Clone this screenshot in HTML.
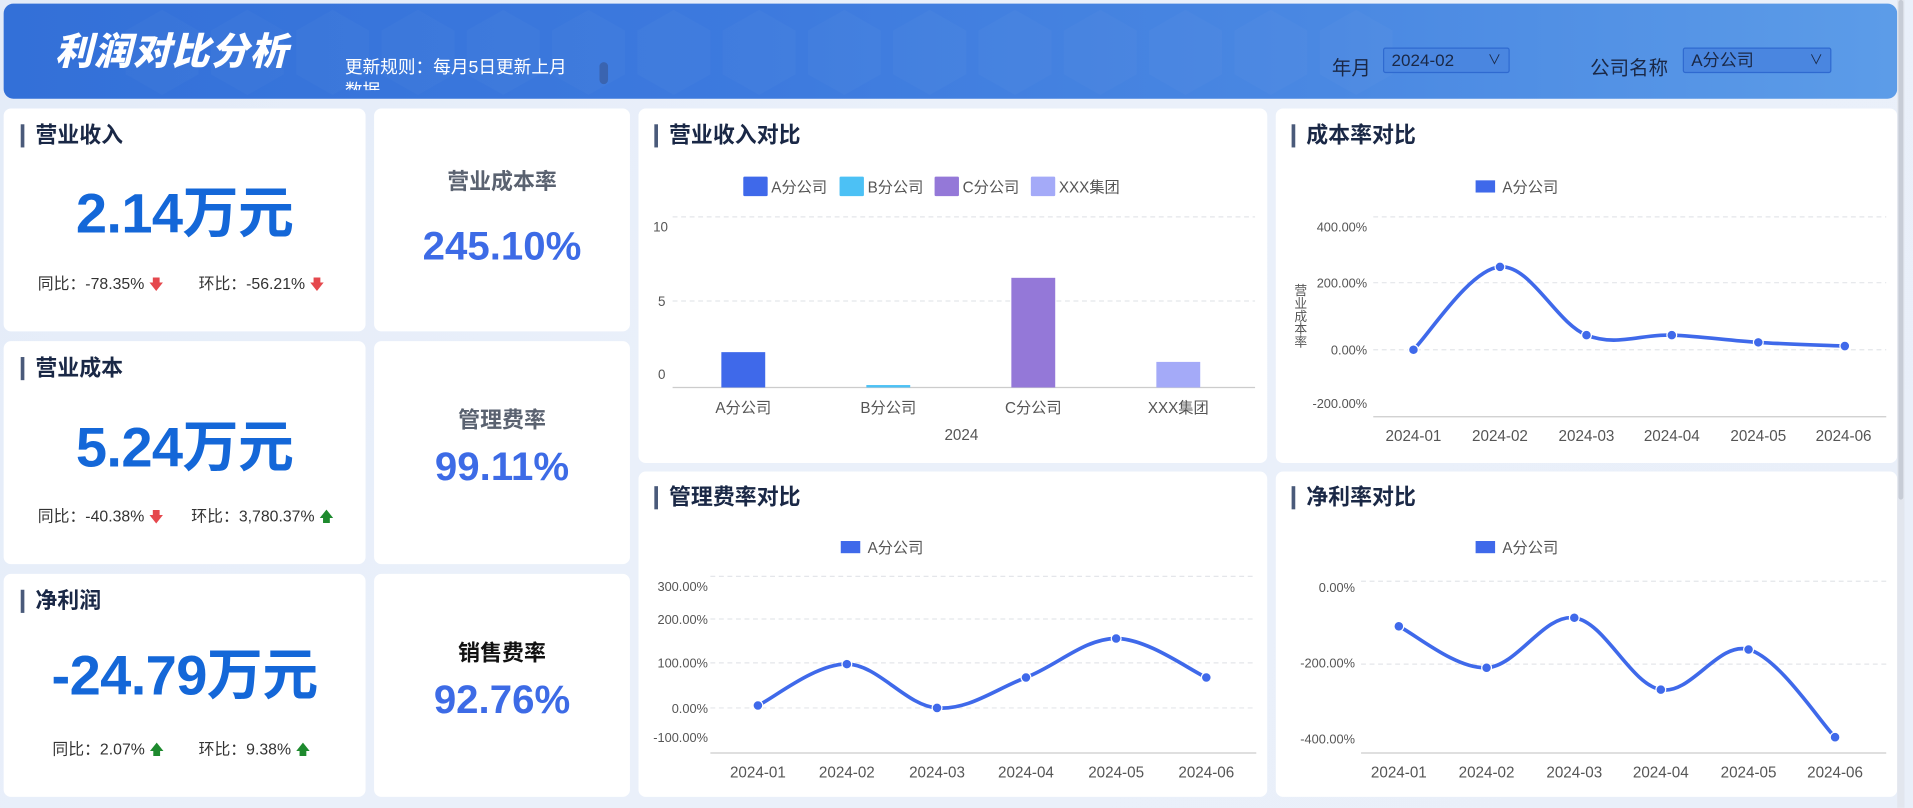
<!DOCTYPE html>
<html><head><meta charset="utf-8">
<style>
*{margin:0;padding:0;box-sizing:border-box}
html,body{width:1913px;height:807px;overflow:hidden;background:#e9eff9}
body{font-family:"Liberation Sans","Noto Sans CJK SC",sans-serif}
#w{position:absolute;left:0;top:0;width:1570px;height:663px;transform:scale(1.2185);transform-origin:0 0;background:linear-gradient(135deg,#e3ebf8,#eaf0fa 40%,#e9eff9)}
.a{position:absolute}
.card{position:absolute;background:#fff;border-radius:6px}
.hd{position:absolute;left:3px;top:3px;width:1554px;height:78px;border-radius:8px;background:linear-gradient(90deg,#3370d8 0%,#3d7ade 40%,#4a88e2 70%,#5c9ce8 100%);overflow:hidden}
.tt{position:absolute;font-size:18px;font-weight:bold;color:#1a2846;padding-left:12px;line-height:20px}
.tt:before{content:"";position:absolute;left:0;top:1px;width:3px;height:19px;background:#4a5a7a}
.big{position:absolute;left:0;width:297px;text-align:center;font-weight:bold;color:#1467d8;font-size:46px;letter-spacing:-0.5px}
.sub{position:absolute;font-size:13px;color:#333}
.dn{color:#e5484d;font-size:12px}
.up{color:#1e8a2e;font-size:12px}
.ml{position:absolute;left:0;width:210px;text-align:center;font-weight:bold;font-size:18px;color:#5a6270}
.mv{position:absolute;left:0;width:210px;text-align:center;font-weight:bold;font-size:33px;color:#3d6be6}
svg text{font-family:"Liberation Sans","Noto Sans CJK SC",sans-serif}
.sel{position:absolute;height:21px;background:#4a86e0;border:1px solid #2f6ad0;border-radius:2px;color:#1a2846;font-size:14px;line-height:19px;padding-left:6px}
.sel span{position:absolute;right:6px;top:1px;font-size:11px}
</style></head><body>
<div id="w">
<div class="hd">
 <svg class="a" style="left:0;top:0" width="1554" height="78">
  <g fill="rgba(255,255,255,0.025)">
   <polygon points="130,5 160,22 160,58 130,75 100,58 100,22"/>
   <polygon points="200,5 230,22 230,58 200,75 170,58 170,22"/>
   <polygon points="270,5 300,22 300,58 270,75 240,58 240,22"/>
   <polygon points="340,5 370,22 370,58 340,75 310,58 310,22"/>
   <polygon points="410,5 440,22 440,58 410,75 380,58 380,22"/>
   <polygon points="480,5 510,22 510,58 480,75 450,58 450,22"/>
   <polygon points="550,5 580,22 580,58 550,75 520,58 520,22"/>
   <polygon points="620,5 650,22 650,58 620,75 590,58 590,22"/>
   <polygon points="690,5 720,22 720,58 690,75 660,58 660,22"/>
   <polygon points="760,5 790,22 790,58 760,75 730,58 730,22"/>
   <polygon points="830,5 860,22 860,58 830,75 800,58 800,22"/>
   <polygon points="900,5 930,22 930,58 900,75 870,58 870,22"/>
   <polygon points="970,5 1000,22 1000,58 970,75 940,58 940,22"/>
   <polygon points="1040,5 1070,22 1070,58 1040,75 1010,58 1010,22"/>
   <polygon points="1110,5 1140,22 1140,58 1110,75 1080,58 1080,22"/>
  </g>
 </svg>
 <div class="a" style="left:42px;top:22px;font-size:31px;font-weight:900;font-style:italic;color:#fff;letter-spacing:1px;line-height:36px">利润对比分析</div>
 <div class="a" style="left:280px;top:44px;width:188px;height:27px;overflow:hidden;font-size:14.5px;color:#fff;line-height:19px">更新规则：每月5日更新上月数据</div>
 <div class="a" style="left:489px;top:48px;width:7px;height:18px;border-radius:4px;background:#3a64b0"></div>
 <div class="a" style="left:1090px;top:39px;font-size:16px;color:#1a2846">年月</div>
 <div class="sel" style="left:1132px;top:36px;width:104px">2024-02<span>∨</span></div>
 <div class="a" style="left:1302px;top:39px;font-size:16px;color:#1a2846">公司名称</div>
 <div class="sel" style="left:1378px;top:36px;width:122px">A分公司<span>∨</span></div>
</div>

<div class="card" style="left:3px;top:89px;width:297px;height:183px">
 <div class="tt" style="left:14px;top:12px">营业收入</div>
 <div class="big" style="top:50px">2.14万元</div>
 <div class="sub" style="left:28px;top:133px">同比：-78.35% <span class="dn">🡇</span></div>
 <div class="sub" style="left:160px;top:133px">环比：-56.21% <span class="dn">🡇</span></div>
</div>
<div class="card" style="left:3px;top:280px;width:297px;height:183px">
 <div class="tt" style="left:14px;top:12px">营业成本</div>
 <div class="big" style="top:51px">5.24万元</div>
 <div class="sub" style="left:28px;top:133px">同比：-40.38% <span class="dn">🡇</span></div>
 <div class="sub" style="left:154px;top:133px">环比：3,780.37% <span class="up">🡅</span></div>
</div>
<div class="card" style="left:3px;top:471px;width:297px;height:183px">
 <div class="tt" style="left:14px;top:12px">净利润</div>
 <div class="big" style="top:47px">-24.79万元</div>
 <div class="sub" style="left:40px;top:133px">同比：2.07% <span class="up">🡅</span></div>
 <div class="sub" style="left:160px;top:133px">环比：9.38% <span class="up">🡅</span></div>
</div>

<div class="card" style="left:307px;top:89px;width:210px;height:183px">
 <div class="ml" style="top:46px">营业成本率</div>
 <div class="mv" style="top:94px">245.10%</div>
</div>
<div class="card" style="left:307px;top:280px;width:210px;height:183px">
 <div class="ml" style="top:51px">管理费率</div>
 <div class="mv" style="top:84px">99.11%</div>
</div>
<div class="card" style="left:307px;top:471px;width:210px;height:183px">
 <div class="ml" style="top:51px;color:#111">销售费率</div>
 <div class="mv" style="top:84px">92.76%</div>
</div>

<div class="card" style="left:524px;top:89px;width:516px;height:291px"><div class="tt" style="left:13px;top:12px">营业收入对比</div></div>
<div class="card" style="left:1047px;top:89px;width:510px;height:291px"><div class="tt" style="left:13px;top:12px">成本率对比</div></div>
<div class="card" style="left:524px;top:387px;width:516px;height:267px"><div class="tt" style="left:13px;top:11px">管理费率对比</div></div>
<div class="card" style="left:1047px;top:387px;width:510px;height:267px"><div class="tt" style="left:13px;top:11px">净利率对比</div></div>
<div class="a" style="left:1061px;top:233px;writing-mode:vertical-rl;font-size:10.5px;color:#555;line-height:11px">营业成本率</div>

<svg class="a" style="left:0;top:0" width="1570" height="663" id="sv">
 <g font-size="11" fill="#555">
  <rect x="610" y="145" width="20" height="16" rx="1" fill="#3f69ea"/><text x="633" y="158" font-size="12.5">A分公司</text>
  <rect x="689" y="145" width="20" height="16" rx="1" fill="#4cc1f5"/><text x="712" y="158" font-size="12.5">B分公司</text>
  <rect x="767" y="145" width="20" height="16" rx="1" fill="#9478d8"/><text x="790" y="158" font-size="12.5">C分公司</text>
  <rect x="846" y="145" width="20" height="16" rx="1" fill="#a4aaf8"/><text x="869" y="158" font-size="12.5">XXX集团</text>
  <g stroke="#e4e6ea" stroke-dasharray="4,3"><line x1="552" y1="178" x2="1030" y2="178"/><line x1="552" y1="247" x2="1030" y2="247"/></g>
  <line x1="552" y1="318" x2="1030" y2="318" stroke="#ccc"/>
  <text x="536" y="190">10</text><text x="540" y="251">5</text><text x="540" y="311">0</text>
  <rect x="592" y="289" width="36" height="29" fill="#3f69ea"/>
  <rect x="711" y="316" width="36" height="2" fill="#4cc1f5"/>
  <rect x="830" y="228" width="36" height="90" fill="#9478d8"/>
  <rect x="949" y="297" width="36" height="21" fill="#a4aaf8"/>
  <g font-size="12.5" text-anchor="middle"><text x="610" y="339">A分公司</text><text x="729" y="339">B分公司</text><text x="848" y="339">C分公司</text><text x="967" y="339">XXX集团</text><text x="789" y="361">2024</text></g>

  <rect x="1211" y="148" width="16" height="10" fill="#3f69ea"/><text x="1233" y="158" font-size="12.5">A分公司</text>
  <g stroke="#e4e6ea" stroke-dasharray="4,3"><line x1="1127" y1="178" x2="1548" y2="178"/><line x1="1127" y1="232" x2="1548" y2="232"/><line x1="1127" y1="287" x2="1548" y2="287"/></g>
  <line x1="1127" y1="342" x2="1548" y2="342" stroke="#ccc"/>
  <g text-anchor="end" font-size="10.5"><text x="1122" y="190">400.00%</text><text x="1122" y="236">200.00%</text><text x="1122" y="291">0.00%</text><text x="1122" y="335">-200.00%</text></g>
  <g font-size="12.5" text-anchor="middle"><text x="1160" y="362">2024-01</text><text x="1231" y="362">2024-02</text><text x="1302" y="362">2024-03</text><text x="1372" y="362">2024-04</text><text x="1443" y="362">2024-05</text><text x="1513" y="362">2024-06</text></g>

  <rect x="690" y="444" width="16" height="10" fill="#3f69ea"/><text x="712" y="454" font-size="12.5">A分公司</text>
  <g stroke="#e4e6ea" stroke-dasharray="4,3"><line x1="583" y1="473" x2="1031" y2="473"/><line x1="583" y1="508" x2="1031" y2="508"/><line x1="583" y1="544" x2="1031" y2="544"/><line x1="583" y1="581" x2="1031" y2="581"/></g>
  <line x1="583" y1="618" x2="1031" y2="618" stroke="#ccc"/>
  <g text-anchor="end" font-size="10.5"><text x="581" y="485">300.00%</text><text x="581" y="512">200.00%</text><text x="581" y="548">100.00%</text><text x="581" y="585">0.00%</text><text x="581" y="609">-100.00%</text></g>
  <g font-size="12.5" text-anchor="middle"><text x="622" y="638">2024-01</text><text x="695" y="638">2024-02</text><text x="769" y="638">2024-03</text><text x="842" y="638">2024-04</text><text x="916" y="638">2024-05</text><text x="990" y="638">2024-06</text></g>

  <rect x="1211" y="444" width="16" height="10" fill="#3f69ea"/><text x="1233" y="454" font-size="12.5">A分公司</text>
  <g stroke="#e4e6ea" stroke-dasharray="4,3"><line x1="1117" y1="477" x2="1548" y2="477"/><line x1="1117" y1="545" x2="1548" y2="545"/></g>
  <line x1="1117" y1="618" x2="1548" y2="618" stroke="#ccc"/>
  <g text-anchor="end" font-size="10.5"><text x="1112" y="486">0.00%</text><text x="1112" y="548">-200.00%</text><text x="1112" y="610">-400.00%</text></g>
  <g font-size="12.5" text-anchor="middle"><text x="1148" y="638">2024-01</text><text x="1220" y="638">2024-02</text><text x="1292" y="638">2024-03</text><text x="1363" y="638">2024-04</text><text x="1435" y="638">2024-05</text><text x="1506" y="638">2024-06</text></g>
 </g>
 <g id="lines" fill="none" stroke="#3f69ea" stroke-width="3"></g>
 <g id="dots" fill="#3f69ea"></g>
 <rect x="1557" y="0" width="6" height="663" fill="#e2e6ee"/>
 <rect x="1558" y="0" width="4" height="410" rx="2" fill="#c7ccd6"/>
</svg>
</div>
<script>
var sets=[
[[1160,287],[1231,219],[1302,275],[1372,275],[1443,281],[1514,284]],
[[622,579],[695,545],[769,581],[842,556],[916,524],[990,556]],
[[1148,514],[1220,548],[1292,507],[1363,566],[1435,533],[1506,605]]];
var L=document.getElementById('lines'),D=document.getElementById('dots'),ns='http://www.w3.org/2000/svg';
sets.forEach(function(p){
 var d='M'+p[0][0]+','+p[0][1],t=0.35;
 for(var i=0;i<p.length-1;i++){
  var p0=p[i-1]||p[i],p1=p[i],p2=p[i+1],p3=p[i+2]||p2;
  var c1x=p1[0]+(p2[0]-p0[0])*t/2,c1y=p1[1]+(p2[1]-p0[1])*t/2;
  var c2x=p2[0]-(p3[0]-p1[0])*t/2,c2y=p2[1]-(p3[1]-p1[1])*t/2;
  d+=' C'+c1x+','+c1y+' '+c2x+','+c2y+' '+p2[0]+','+p2[1];
 }
 var e=document.createElementNS(ns,'path');e.setAttribute('d',d);L.appendChild(e);
 p.forEach(function(q){var c=document.createElementNS(ns,'circle');c.setAttribute('cx',q[0]);c.setAttribute('cy',q[1]);c.setAttribute('r',4);c.setAttribute('stroke','#fff');c.setAttribute('stroke-width','1');D.appendChild(c);});
});
</script>
</body></html>
